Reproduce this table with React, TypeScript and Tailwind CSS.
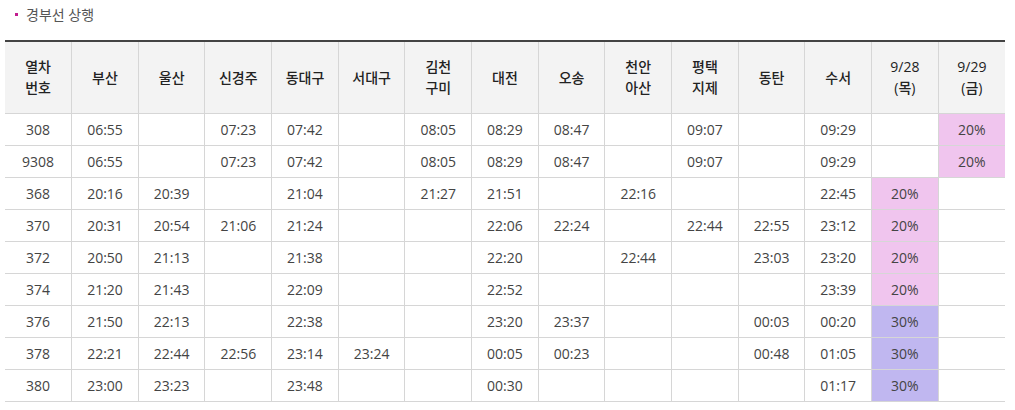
const heads: string[][] = [
  ["열차", "번호"],
  ["부산"],
  ["울산"],
  ["신경주"],
  ["동대구"],
  ["서대구"],
  ["김천", "구미"],
  ["대전"],
  ["오송"],
  ["천안", "아산"],
  ["평택", "지제"],
  ["동탄"],
  ["수서"],
  ["9/28", "(목)"],
  ["9/29", "(금)"],
];

type Row = { times: string[]; d28?: string; d29?: string; tone?: "pink" | "purple" };

const rows: Row[] = [
  { times: ["308", "06:55", "", "07:23", "07:42", "", "08:05", "08:29", "08:47", "", "09:07", "", "09:29"], d29: "20%", tone: "pink" },
  { times: ["9308", "06:55", "", "07:23", "07:42", "", "08:05", "08:29", "08:47", "", "09:07", "", "09:29"], d29: "20%", tone: "pink" },
  { times: ["368", "20:16", "20:39", "", "21:04", "", "21:27", "21:51", "", "22:16", "", "", "22:45"], d28: "20%", tone: "pink" },
  { times: ["370", "20:31", "20:54", "21:06", "21:24", "", "", "22:06", "22:24", "", "22:44", "22:55", "23:12"], d28: "20%", tone: "pink" },
  { times: ["372", "20:50", "21:13", "", "21:38", "", "", "22:20", "", "22:44", "", "23:03", "23:20"], d28: "20%", tone: "pink" },
  { times: ["374", "21:20", "21:43", "", "22:09", "", "", "22:52", "", "", "", "", "23:39"], d28: "20%", tone: "pink" },
  { times: ["376", "21:50", "22:13", "", "22:38", "", "", "23:20", "23:37", "", "", "00:03", "00:20"], d28: "30%", tone: "purple" },
  { times: ["378", "22:21", "22:44", "22:56", "23:14", "23:24", "", "00:05", "00:23", "", "", "00:48", "01:05"], d28: "30%", tone: "purple" },
  { times: ["380", "23:00", "23:23", "", "23:48", "", "", "00:30", "", "", "", "", "01:17"], d28: "30%", tone: "purple" },
];

function RateCell({ value, tone }: { value?: string; tone?: Row["tone"] }) {
  const bg = !value ? "" : tone === "purple" ? "bg-[#c0b7f0]" : "bg-[#f0c5ee]";
  return (
    <td className={`h-[32px] border-l border-b border-[#d6d6d6] p-0 text-center ${bg}`}>
      {value}
    </td>
  );
}

export default function App() {
  return (
    <div className="min-h-[410px] bg-white pl-[5px] pt-[4px] font-['Open_Sans','Noto_Sans_CJK_KR',sans-serif]">
      <div className="flex h-[20px] items-center pl-[10px] text-[14px] text-[#555]">
        <span className="mr-[8px] h-[3px] w-[3px] bg-[#c21d8f]" />
        경부선 상행
      </div>
      <table className="mt-[16px] w-[1000px] table-fixed border-collapse border-t-2 border-t-[#444] text-[14px] text-[#444]">
        <thead>
          <tr className="bg-[#f3f3f3]">
            {heads.map((h, i) => (
              <th
                key={i}
                className={`h-[72px] border-b border-[#d6d6d6] p-0 text-center align-middle text-[14px] font-medium leading-[21px] text-[#222] ${i > 0 ? "border-l" : ""}`}
              >
                {h.map((line, j) => (
                  <div key={j}>{line}</div>
                ))}
              </th>
            ))}
          </tr>
        </thead>
        <tbody>
          {rows.map((r) => (
            <tr key={r.times[0]}>
              {r.times.map((t, i) => (
                <td
                  key={i}
                  className={`h-[32px] border-b border-[#d6d6d6] p-0 text-center ${i > 0 ? "border-l" : ""}`}
                >
                  {t}
                </td>
              ))}
              <RateCell value={r.d28} tone={r.tone} />
              <RateCell value={r.d29} tone={r.tone} />
            </tr>
          ))}
        </tbody>
      </table>
    </div>
  );
}
